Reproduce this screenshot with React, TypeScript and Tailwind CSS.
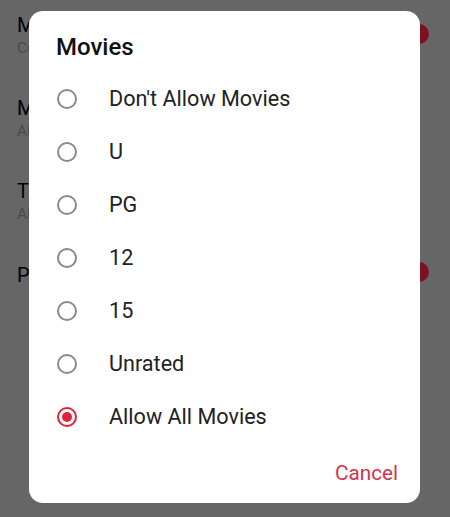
import React from "react";

const options = ["Don't Allow Movies", "U", "PG", "12", "15", "Unrated", "Allow All Movies"];

function Radio({ checked }: { checked: boolean }) {
  return (
    <span
      className={
        "flex h-[20px] w-[20px] items-center justify-center rounded-full border-2 " +
        (checked ? "border-[#e0213e]" : "border-[#8a8a8a]")
      }
    >
      {checked && <span className="h-[10px] w-[10px] rounded-full bg-[#e0213e]" />}
    </span>
  );
}

export default function App() {
  return (
    <div
      className="relative h-[517px] w-[450px] overflow-hidden bg-[#666666]"
      style={{ fontFamily: "Roboto, 'Noto Sans', sans-serif" }}
    >
      {/* background list (scrimmed), visible only left of the dialog */}
      <div className="flex w-[29px] flex-col overflow-hidden whitespace-nowrap pl-[17px] pt-[13px] text-[#000]">
        <div className="flex h-[83px] flex-col">
          <span className="text-[20px] leading-[24px]">Movies</span>
          <span className="text-[15.5px] leading-[22px] text-[#4a4a4a]">Custom</span>
        </div>
        <div className="flex h-[83px] flex-col">
          <span className="text-[20px] leading-[24px]">Music</span>
          <span className="text-[15.5px] leading-[22px] text-[#4a4a4a]">All</span>
        </div>
        <div className="flex h-[84px] flex-col">
          <span className="text-[20px] leading-[24px]">TV</span>
          <span className="text-[15.5px] leading-[22px] text-[#4a4a4a]">All</span>
        </div>
        <div className="flex flex-col">
          <span className="text-[20px] leading-[24px]">Podcasts</span>
        </div>
      </div>
      <span className="absolute left-[409px] top-[24px] h-[20px] w-[20px] rounded-full bg-[#7d1022]" />
      <span className="absolute left-[409px] top-[262px] h-[20px] w-[20px] rounded-full bg-[#7d1022]" />

      {/* dialog */}
      <div className="absolute left-[29px] top-[11px] flex h-[492px] w-[391px] flex-col rounded-[14px] bg-white">
        <div className="pl-[27px] pt-[21px] text-[24px] font-medium leading-[30px] text-[#111]">Movies</div>
        <div className="mt-[10px] flex flex-col">
          {options.map((o, i) => (
            <div key={o} className="flex h-[53px] items-center">
              <span className="ml-[28px]">
                <Radio checked={i === options.length - 1} />
              </span>
              <span className="ml-[32px] text-[21.6px] leading-[26px] text-[#222]">{o}</span>
            </div>
          ))}
        </div>
        <div className="mt-auto flex justify-end pb-[17px] pr-[22px]">
          <span className="text-[20.7px] leading-[26px] text-[#d2344b]">Cancel</span>
        </div>
      </div>
    </div>
  );
}
